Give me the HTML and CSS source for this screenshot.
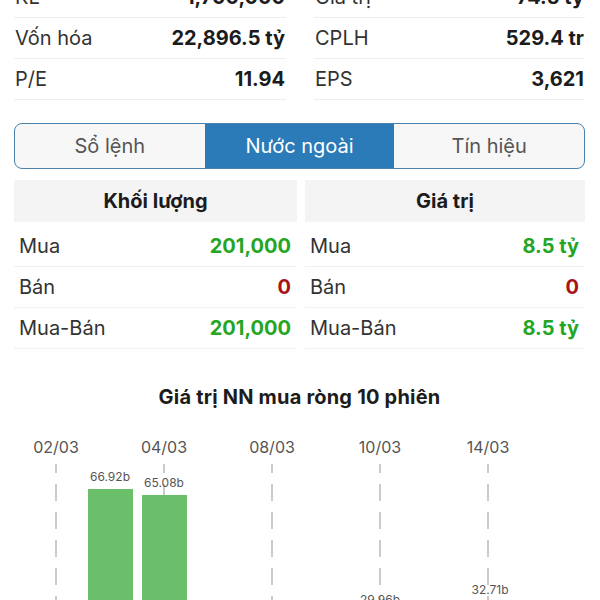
FILE: index.html
```html
<!DOCTYPE html>
<html lang="vi">
<head>
  <meta charset="UTF-8">
  <meta name="viewport" content="width=device-width, initial-scale=1.0">
  <title>Nước ngoài</title>
  <link rel="stylesheet" href="styles.css">
</head>
<body>

<div class="page">

  <!-- Thông tin cơ bản -->
  <div class="stats">
    <div class="stats-col">
      <div class="stat-row"><span>KL</span><b>1,700,000</b></div>
      <div class="stat-row"><span>Vốn hóa</span><b>22,896.5 tỷ</b></div>
      <div class="stat-row"><span>P/E</span><b>11.94</b></div>
    </div>
    <div class="stats-col">
      <div class="stat-row"><span>Giá trị</span><b>74.5 tỷ</b></div>
      <div class="stat-row"><span>CPLH</span><b>529.4 tr</b></div>
      <div class="stat-row"><span>EPS</span><b>3,621</b></div>
    </div>
  </div>

  <!-- Tabs -->
  <div class="tabs">
    <div class="tab">Sổ lệnh</div>
    <div class="tab active">Nước ngoài</div>
    <div class="tab">Tín hiệu</div>
  </div>

  <!-- Giao dịch nước ngoài -->
  <div class="foreign">
    <div class="foreign-col">
      <div class="foreign-head">Khối lượng</div>
      <div class="foreign-row"><span>Mua</span><b class="up">201,000</b></div>
      <div class="foreign-row"><span>Bán</span><b class="down">0</b></div>
      <div class="foreign-row"><span>Mua-Bán</span><b class="up">201,000</b></div>
    </div>
    <div class="foreign-col">
      <div class="foreign-head">Giá trị</div>
      <div class="foreign-row"><span>Mua</span><b class="up">8.5 tỷ</b></div>
      <div class="foreign-row"><span>Bán</span><b class="down">0</b></div>
      <div class="foreign-row"><span>Mua-Bán</span><b class="up">8.5 tỷ</b></div>
    </div>
  </div>

  <div class="chart-title">Giá trị NN mua ròng 10 phiên</div>
</div>

<!-- Biểu đồ 10 phiên -->
<svg class="chart" width="600" height="190" viewBox="0 420 600 190">
  <g class="grid">
    <line x1="56" y1="463" x2="56" y2="610"/>
    <line x1="164" y1="463" x2="164" y2="610"/>
    <line x1="272" y1="463" x2="272" y2="610"/>
    <line x1="380" y1="463" x2="380" y2="610"/>
    <line x1="488" y1="463" x2="488" y2="610"/>
  </g>
  <g class="dates">
    <text x="56" y="452">02/03</text>
    <text x="164" y="452">04/03</text>
    <text x="272" y="452">08/03</text>
    <text x="380" y="452">10/03</text>
    <text x="488" y="452">14/03</text>
  </g>
  <g class="bars">
    <rect x="88" y="488" width="45" height="130"/>
    <rect x="142" y="494" width="45" height="124"/>
    <rect x="358" y="608" width="45" height="10"/>
    <rect x="466" y="600" width="45" height="10"/>
  </g>
  <g class="values">
    <text x="110" y="480">66.92b</text>
    <text x="164" y="486">65.08b</text>
    <text x="380" y="603">29.96b</text>
    <text x="490" y="593">32.71b</text>
  </g>
</svg>

</body>
</html>
```

FILE: styles.css
```css
/* Chung */
body {
  margin: 0;
  padding: 0;
  background-color: #fff;
  color: #333;
  font-family: 'Inter', 'Roboto', sans-serif;
  overflow: hidden;
  height: 600px;
}

.page {
  padding: 0 15px 0 14px;
}

/* Thông tin cơ bản */
.stats {
  display: grid;
  grid-template-columns: 272px 271px;
  column-gap: 28px;
  margin-top: -23px; /* dòng đầu bị cuộn mất một phần */
}

.stat-row {
  display: flex;
  justify-content: space-between;
  align-items: center;
  height: 40px;
  padding: 0 1px;
  border-bottom: 1px solid #eee;
  font-size: 20px;
}

.stat-row span {
  color: #333;
}

.stat-row b {
  color: #1c1c1c;
  font-weight: 700;
}

/* Tabs */
.tabs {
  display: flex;
  margin-top: 23px;
  height: 44px;
  border: 1.5px solid #4a82ad;
  border-radius: 8px;
  overflow: hidden;
  background-color: #f7f7f7;
}

.tab {
  flex: 1;
  display: flex;
  align-items: center;
  justify-content: center;
  font-size: 20px;
  color: #555;
}

.tab.active {
  background-color: #2b7bb8;
  color: #fff;
}

/* Nước ngoài */
.foreign {
  display: grid;
  grid-template-columns: 283px 280px;
  column-gap: 8px;
  margin-top: 11px;
}

.foreign-head {
  height: 42px;
  display: flex;
  align-items: center;
  justify-content: center;
  background-color: #f4f4f4;
  font-size: 20px;
  font-weight: 700;
  color: #1c1c1c;
  margin-bottom: 4px;
}

.foreign-row {
  display: flex;
  justify-content: space-between;
  align-items: center;
  height: 40px;
  padding: 0 6px 0 5px;
  border-bottom: 1px solid #f0f0f0;
  font-size: 20px;
}

.foreign-row b {
  font-weight: 700;
}

.up {
  color: #24a624;
}

.down {
  color: #a81414;
}

/* Biểu đồ */
.chart-title {
  margin-top: 36px;
  line-height: 24px;
  text-align: center;
  font-size: 20px;
  font-weight: 700;
  letter-spacing: 0.2px;
  color: #1c1c1c;
}

.chart {
  display: block;
  margin-top: 12px;
}

.grid line {
  stroke: #bbb;
  stroke-width: 1.5;
  stroke-dasharray: 17 11;
  stroke-dashoffset: 8;
}

.dates text {
  font-family: 'Inter', 'Roboto', sans-serif;
  font-size: 16px;
  fill: #555;
  text-anchor: middle;
}

.bars rect {
  fill: #6cbf6a;
}

.values text {
  font-family: 'Inter', 'Roboto', sans-serif;
  font-size: 12px;
  fill: #555;
  text-anchor: middle;
}
```
